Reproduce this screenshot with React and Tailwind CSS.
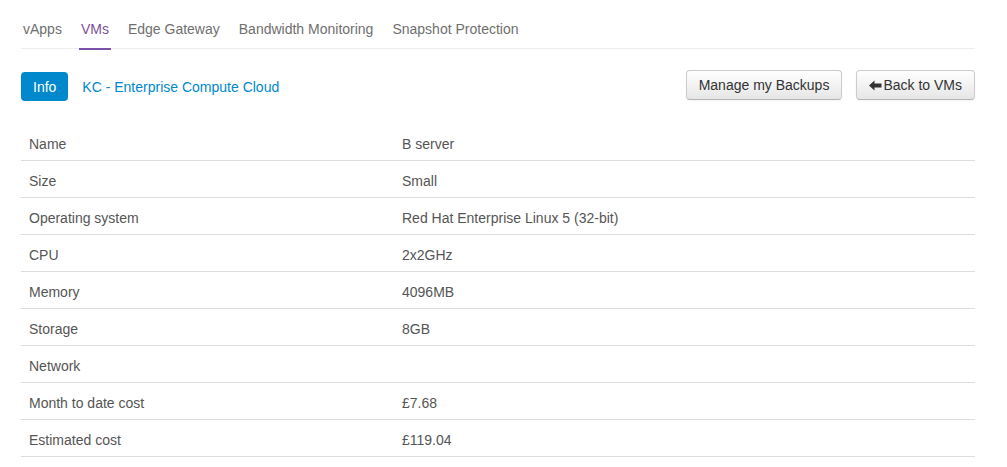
const tabs = ["vApps", "VMs", "Edge Gateway", "Bandwidth Monitoring", "Snapshot Protection"]

const rows = [
    ["Name", "B server"],
    ["Size", "Small"],
    ["Operating system", "Red Hat Enterprise Linux 5 (32-bit)"],
    ["CPU", "2x2GHz"],
    ["Memory", "4096MB"],
    ["Storage", "8GB"],
    ["Network", ""],
    ["Month to date cost", "£7.68"],
    ["Estimated cost", "£119.04"],
]

function ArrowLeft() {
    return (
        <svg width="13" height="11" viewBox="0 0 13 11" className="mr-[1px]">
            <path d="M0 5.5 L5.5 0.5 L5.5 3.5 L12.5 3.5 L12.5 7.5 L5.5 7.5 L5.5 10.5 Z" fill="#333" />
        </svg>
    )
}

export default function App() {
    return (
        <div className="min-h-screen bg-white font-['Liberation_Sans',Arial,sans-serif] text-[14px] leading-5 text-[#555]">
            <div className="ml-[21px] w-[954px] pt-[9px]">
                <ul className="flex gap-[15px] border-b border-[#eee]">
                    {tabs.map((t) => (
                        <li
                            key={t}
                            className={
                                t === "VMs"
                                    ? "-mb-[2px] border-b-2 border-[#7b52a8] px-[2px] pt-2.5 pb-[9px] text-[#7b4f9d]"
                                    : "-mb-[2px] border-b-2 border-transparent px-[2px] pt-2.5 pb-[9px] text-[#6f6f6f]"
                            }
                        >
                            {t}
                        </li>
                    ))}
                </ul>

                <div className="mt-[21px] flex items-start justify-between">
                    <div className="mt-[2px] flex items-center">
                        <span className="flex h-[29px] items-center rounded-[4px] bg-[#0088cc] px-3 text-white">Info</span>
                        <a href="#" className="ml-[14px] text-[#0088cc]">KC - Enterprise Compute Cloud</a>
                    </div>
                    <div className="flex gap-[14px]">
                        <button className="flex h-[30px] items-center rounded-[4px] border border-[#ccc] border-b-[#b3b3b3] bg-linear-to-b from-white to-[#e6e6e6] px-3 text-[#333] shadow-[inset_0_1px_0_rgba(255,255,255,0.2),0_1px_2px_rgba(0,0,0,0.05)]">
                            Manage my Backups
                        </button>
                        <button className="flex h-[30px] items-center rounded-[4px] border border-[#ccc] border-b-[#b3b3b3] bg-linear-to-b from-white to-[#e6e6e6] px-3 text-[#333] shadow-[inset_0_1px_0_rgba(255,255,255,0.2),0_1px_2px_rgba(0,0,0,0.05)]">
                            <ArrowLeft />
                            Back to VMs
                        </button>
                    </div>
                </div>

                <table className="mt-[23px] w-full border-collapse">
                    <tbody>
                        {rows.map(([k, v]) => (
                            <tr key={k} className="border-b border-[#ddd]">
                                <td className="w-[373px] px-2 pt-[10px] pb-[6px]">{k}</td>
                                <td className="px-2 pt-[10px] pb-[6px]">{v}</td>
                            </tr>
                        ))}
                    </tbody>
                </table>
            </div>
        </div>
    )
}
